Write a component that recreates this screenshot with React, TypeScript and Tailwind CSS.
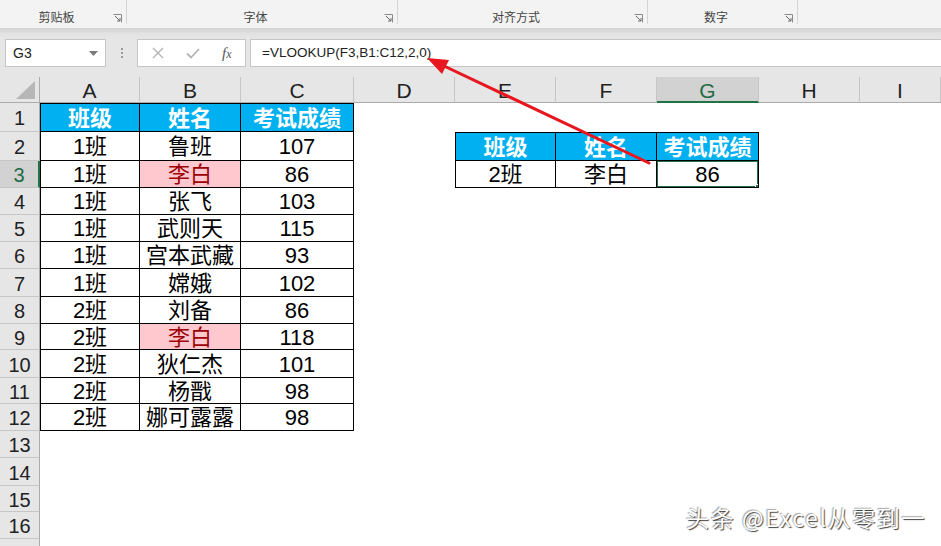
import type { ReactNode } from "react";

const FONT = "font-['Liberation_Sans','Noto_Sans_CJK_SC',sans-serif]";

const COLS = ["A", "B", "C", "D", "E", "F", "G", "H", "I"];

type Row = { cls: string; name: string; score: string; hit?: boolean };

const DATA: Row[] = [
  { cls: "1班", name: "鲁班", score: "107" },
  { cls: "1班", name: "李白", score: "86", hit: true },
  { cls: "1班", name: "张飞", score: "103" },
  { cls: "1班", name: "武则天", score: "115" },
  { cls: "1班", name: "宫本武藏", score: "93" },
  { cls: "1班", name: "嫦娥", score: "102" },
  { cls: "2班", name: "刘备", score: "86" },
  { cls: "2班", name: "李白", score: "118", hit: true },
  { cls: "2班", name: "狄仁杰", score: "101" },
  { cls: "2班", name: "杨戬", score: "98" },
  { cls: "2班", name: "娜可露露", score: "98" },
];

const HEAD = ["班级", "姓名", "考试成绩"];

function Launcher() {
  return (
    <svg width="9" height="9" viewBox="0 0 9 9" className="mb-[1px] mr-[4px] shrink-0">
      <path d="M0.5 0.5h8v8" fill="none" stroke="#8a8a8a" strokeWidth="1" />
      <path d="M2 2l5 5M7 4v3H4" fill="none" stroke="#6a6a6a" strokeWidth="1" />
    </svg>
  );
}

function RibbonGroup({ label, width }: { label: string; width: string }) {
  return (
    <div className={`flex h-[24px] items-end border-r border-[#d4d4d4] ${width}`}>
      <div className="flex-1 text-center text-[12px] leading-none text-[#444]">{label}</div>
      <Launcher />
    </div>
  );
}

function Cell({
  children,
  className = "",
}: {
  children?: ReactNode;
  className?: string;
}) {
  return (
    <div className={`flex items-center justify-center overflow-hidden whitespace-nowrap pt-[2px] leading-none ${className}`}>
      {children}
    </div>
  );
}

function cellFor(r: number, c: number): ReactNode {
  // r: 1-based sheet row, c: 0-based column index (A=0)
  const key = `${r}-${c}`;
  if (r <= 12 && c <= 2) {
    const edge = `${c === 0 ? "border-l" : ""} ${r === 1 ? "border-t" : ""}`;
    if (r === 1) {
      return (
        <Cell key={key} className={`border-r border-b border-black bg-[#00b0f0] text-[22px] font-bold text-white ${edge}`}>
          {HEAD[c]}
        </Cell>
      );
    }
    const d = DATA[r - 2];
    const val = c === 0 ? d.cls : c === 1 ? d.name : d.score;
    const pink = c === 1 && d.hit;
    return (
      <Cell
        key={key}
        className={`border-r border-b border-black text-[22px] ${edge} ${pink ? "bg-[#ffc7ce] text-[#9c0006]" : "text-black"}`}
      >
        {val}
      </Cell>
    );
  }
  if ((r === 2 || r === 3) && c >= 4 && c <= 6) {
    const edge = `${c === 4 ? "border-l" : ""} ${r === 2 ? "border-t" : ""}`;
    if (r === 2) {
      return (
        <Cell key={key} className={`border-r border-b border-black bg-[#00b0f0] text-[22px] font-bold text-white ${edge}`}>
          {HEAD[c - 4]}
        </Cell>
      );
    }
    const vals = ["2班", "李白", "86"];
    if (c === 6) {
      return (
        <Cell key={key} className={`relative border-r border-b border-black text-[22px] text-black ${edge}`}>
          {vals[c - 4]}
          <span className="absolute -top-px -left-px -right-px -bottom-px border-2 border-[#217346]" />
          <span className="absolute -right-[4px] -bottom-[4px] h-[7px] w-[7px] border border-white bg-[#217346]" />
        </Cell>
      );
    }
    return (
      <Cell key={key} className={`border-r border-b border-black text-[22px] text-black ${edge}`}>
        {vals[c - 4]}
      </Cell>
    );
  }
  return <div key={key} className="bg-white" />;
}

export default function App() {
  const rowNums = Array.from({ length: 17 }, (_, i) => i + 1);

  return (
    <div className={`relative h-[546px] w-[941px] overflow-hidden bg-white ${FONT}`}>
      {/* ribbon group labels */}
      <div className="flex h-[28px] items-start bg-[#f3f3f3]">
        <RibbonGroup label="剪贴板" width="w-[127px]" />
        <RibbonGroup label="字体" width="w-[271px]" />
        <RibbonGroup label="对齐方式" width="w-[250px]" />
        <RibbonGroup label="数字" width="w-[150px]" />
      </div>

      {/* formula bar */}
      <div className="flex h-[49px] flex-col bg-[#e6e6e6]">
        <div className="h-[11px] bg-gradient-to-b from-[#d2d2d2] via-[#e2e2e2] to-[#e6e6e6]" />
        <div className="flex h-[28px] items-stretch">
          <div className="ml-[5px] flex w-[101px] items-center justify-between border border-[#c6c6c6] bg-white pl-[7px] pr-[7px]">
            <span className="text-[14px] text-[#222]">G3</span>
            <svg width="9" height="5" viewBox="0 0 9 5">
              <path d="M0 0h9L4.5 5z" fill="#7a7a7a" />
            </svg>
          </div>
          <div className="flex w-[31px] flex-col items-center justify-center gap-[2px]">
            <span className="h-[2px] w-[2px] bg-[#9a9a9a]" />
            <span className="h-[2px] w-[2px] bg-[#9a9a9a]" />
            <span className="h-[2px] w-[2px] bg-[#9a9a9a]" />
          </div>
          <div className="flex w-[109px] items-center border border-[#c6c6c6] bg-white">
            <svg width="12" height="12" viewBox="0 0 12 12" className="ml-[14px]">
              <path d="M1 1l10 10M11 1L1 11" stroke="#b4b4b4" strokeWidth="1.4" />
            </svg>
            <svg width="14" height="11" viewBox="0 0 14 11" className="ml-[22px]">
              <path d="M1 5.5l4 4L13 1" fill="none" stroke="#b4b4b4" strokeWidth="1.8" />
            </svg>
            <span className="ml-[22px] font-['Liberation_Serif',serif] text-[15px] italic text-[#555]">
              f<span className="text-[12px]">x</span>
            </span>
          </div>
          <div className="ml-[4px] flex flex-1 items-center border-y border-l border-[#c6c6c6] bg-white pl-[11px]">
            <span className="text-[13.5px] text-[#222]">=VLOOKUP(F3,B1:C12,2,0)</span>
          </div>
        </div>
        <div className="flex-1" />
      </div>

      {/* sheet grid */}
      <div className="grid grid-cols-[40px_100px_101px_113px_101px_101px_101px_102px_101px_1fr] grid-rows-[26px_29px_29px_27px_27px_27px_27px_28px_27px_26px_28px_26px_27px_27px_28px_26px_27px_27px]">
        {/* corner */}
        <div className="flex items-end justify-end border-r border-b border-[#ababab] bg-[#e6e6e6] pr-[4px] pb-[3px]">
          <svg width="19" height="18" viewBox="0 0 19 18">
            <path d="M19 0V18H0z" fill="#b7b7b7" />
          </svg>
        </div>
        {COLS.map((col) => (
          <div
            key={col}
            className={`flex items-center justify-center pt-[2px] text-[21px] leading-none ${
              col === "G"
                ? "border-b-2 border-b-[#217346] border-r border-r-[#c6c6c6] bg-[#d2d2d2] text-[#1e6b45]"
                : "border-r border-b border-r-[#c6c6c6] border-b-[#ababab] bg-[#e6e6e6] text-[#222]"
            }`}
          >
            {col}
          </div>
        ))}

        {rowNums.map((r) => (
          <RowCells key={r} r={r} />
        ))}
      </div>

      {/* annotation arrow */}
      <svg className="pointer-events-none absolute inset-0" width="941" height="546" viewBox="0 0 941 546">
        <line x1="444" y1="66" x2="649" y2="163" stroke="#e8161e" strokeWidth="3" strokeLinecap="round" />
        <polygon points="427,58 442,74 449,60" fill="#e8161e" />
      </svg>

      {/* watermark */}
      <div className="absolute right-[15px] bottom-[17px] font-['Noto_Sans_CJK_SC','Liberation_Sans',sans-serif] text-[23px] leading-none tracking-[1.6px] text-white [text-shadow:1px_1px_1px_rgba(0,0,0,0.75),-1px_-1px_1px_rgba(0,0,0,0.35)]">
        头条 @Excel从零到一
      </div>
    </div>
  );
}

function RowCells({ r }: { r: number }) {
  const sel = r === 3;
  return (
    <>
      <div
        className={`flex items-center justify-center pt-[2px] text-[20px] leading-none ${
          sel
            ? "border-r-2 border-r-[#217346] border-b border-b-[#c6c6c6] bg-[#d2d2d2] text-[#1e6b45]"
            : "border-r border-b border-r-[#ababab] border-b-[#c6c6c6] bg-[#e6e6e6] text-[#222]"
        }`}
      >
        {r < 17 ? r : ""}
      </div>
      {COLS.map((_, c) => cellFor(r, c))}
    </>
  );
}
